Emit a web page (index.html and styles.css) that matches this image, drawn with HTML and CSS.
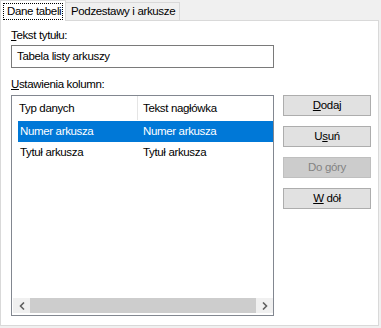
FILE: index.html
```html
<!DOCTYPE html>
<html lang="pl">
<head>
<meta charset="utf-8">
<title>Dane tabeli</title>
<link rel="stylesheet" href="styles.css">
</head>
<body>
<div class="window">
  <div class="tabs">
    <div class="tab active"><span class="focus">Dane tabeli</span></div>
    <div class="tab">Podzestawy i arkusze</div>
  </div>
  <div class="panel">
    <div class="left">
      <div class="label"><u>T</u>ekst tytułu:</div>
      <div class="input">Tabela listy arkuszy</div>
      <div class="label label2"><u>U</u>stawienia kolumn:</div>
      <div class="list">
        <div class="header">
          <div class="hcell c1">Typ danych</div>
          <div class="hcell c2">Tekst nagłówka</div>
        </div>
        <div class="row selected">
          <div class="cell c1">Numer arkusza</div>
          <div class="cell c2">Numer arkusza</div>
        </div>
        <div class="row">
          <div class="cell c1">Tytuł arkusza</div>
          <div class="cell c2">Tytuł arkusza</div>
        </div>
        <div class="filler"></div>
        <div class="hscroll">
          <div class="sbtn"><svg width="6" height="8" viewBox="0 0 6 8"><path d="M5 0.5 L1.5 4 L5 7.5" fill="none" stroke="#606060" stroke-width="1.6"/></svg></div>
          <div class="thumb"></div>
          <div class="sbtn"><svg width="6" height="8" viewBox="0 0 6 8"><path d="M1 0.5 L4.5 4 L1 7.5" fill="none" stroke="#606060" stroke-width="1.6"/></svg></div>
        </div>
      </div>
    </div>
    <div class="buttons">
      <div class="btn"><u>D</u>odaj</div>
      <div class="btn">U<u>s</u>uń</div>
      <div class="btn disabled">Do <u>g</u>óry</div>
      <div class="btn"><u>W</u> dół</div>
    </div>
  </div>
</div>
</body>
</html>
```
FILE: styles.css
```css
html, body {
  margin: 0;
  padding: 0;
  background: #f0f0f0;
}
body {
  font-family: "Liberation Sans", Arial, sans-serif;
  font-size: 11.5px;
  letter-spacing: -0.35px;
  color: #000;
  width: 381px;
  height: 328px;
  overflow: hidden;
}
u { text-decoration: underline; text-underline-offset: 1px; }
.window {
  width: 379px;
}
.tabs {
  display: flex;
  align-items: flex-end;
  height: 20px;
}
.tab {
  box-sizing: border-box;
  height: 18px;
  padding: 0 4px 0 5px;
  border: 1px solid #d9d9d9;
  border-bottom: none;
  border-left: none;
  background: #f0f0f0;
  line-height: 17px;
  white-space: nowrap;
}
.tab.active {
  height: 21px;
  width: 66px;
  margin-bottom: -1px;
  border-left: 1px solid #d9d9d9;
  background: #fff;
  padding: 2px 0 0 2px;
  position: relative;
  z-index: 1;
  line-height: 15px;
}
.focus {
  display: inline-block;
  box-sizing: border-box;
  height: 17px;
  border: 1px dotted #000;
  padding: 0 1px 0 3px;
  line-height: 15px;
  white-space: nowrap;
}
.panel {
  box-sizing: border-box;
  height: 306px;
  border: 1px solid #d9d9d9;
  background: #fff;
  padding: 7px 0 0 10px;
  display: flex;
  gap: 9px;
}
.left {
  width: 263px;
  display: flex;
  flex-direction: column;
}
.label {
  line-height: 15px;
  height: 17px;
}
.label2 {
  margin-top: 9px;
  height: 18px;
}
.input {
  box-sizing: border-box;
  height: 23px;
  border: 1px solid #7a7a7a;
  padding: 0 5px;
  line-height: 21px;
}
.list {
  box-sizing: border-box;
  height: 221px;
  border: 1px solid #828790;
  display: flex;
  flex-direction: column;
  padding-bottom: 2px;
}
.header {
  display: flex;
  height: 25px;
  line-height: 25px;
}
.hcell.c1 {
  box-sizing: border-box;
  width: 126px;
  padding-left: 7px;
  border-right: 1px solid #e5e5e5;
  height: 24px;
}
.hcell.c2 {
  padding-left: 5px;
}
.row {
  display: flex;
  height: 21px;
  line-height: 21px;
  margin-left: 6px;
}
.row .c1 {
  width: 120px;
  padding-left: 2px;
  box-sizing: border-box;
}
.row .c2 {
  flex: 1;
  padding-left: 5px;
}
.row.selected {
  background: #0078d7;
  color: #fff;
}
.filler { flex: 1; }
.hscroll {
  display: flex;
  height: 15px;
  margin-left: 1px;
}
.sbtn {
  width: 17px;
  background: #f0f0f0;
  display: flex;
  align-items: center;
  justify-content: center;
}
.thumb {
  flex: 1;
  background: #cdcdcd;
}
.buttons {
  padding-top: 67px;
  display: flex;
  flex-direction: column;
  gap: 10px;
}
.btn {
  box-sizing: border-box;
  width: 88px;
  height: 21px;
  border: 1px solid #adadad;
  background: #e1e1e1;
  text-align: center;
  line-height: 19px;
}
.btn.disabled {
  background: #cccccc;
  border-color: #bfbfbf;
  color: #838383;
}
```
